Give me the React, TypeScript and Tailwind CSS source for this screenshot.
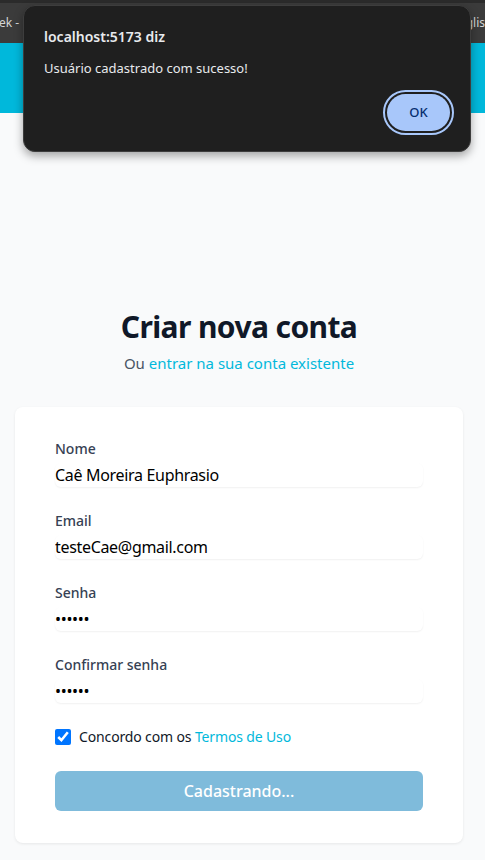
import { useState } from 'react';

const Field = ({ label, type, value }: { label: string; type: string; value: string }) => (
  <div>
    <label className="block text-sm leading-5 font-medium text-gray-700">{label}</label>
    <input
      type={type}
      value={value}
      readOnly
      className="mt-1 block w-full h-6 rounded-md bg-white px-0 text-base leading-6 tracking-[-0.02em] text-black shadow-[0_1px_2px_rgba(0,0,0,0.06)] outline-none"
    />
  </div>
);

const AlertBox = () => (
  <div className="absolute top-[5px] left-[23px] w-[448px] rounded-xl border border-[#3d3d3d] bg-[#1f1f1f] px-5 pt-[21px] pb-5 shadow-[0_4px_10px_rgba(0,0,0,0.35)]">
    <h2 className="text-sm leading-5 font-semibold text-[#e8eaed]">localhost:5173 diz</h2>
    <p className="mt-3 text-[13px] leading-[18px] text-[#e8eaed]">Usuário cadastrado com sucesso!</p>
    <div className="mt-[17px] flex justify-end">
      <button className="h-[37px] w-[63px] rounded-full bg-[#a8c7fa] text-[13px] font-medium text-[#062e6f] outline-2 outline-offset-2 outline-[#a8c7fa]">
        OK
      </button>
    </div>
  </div>
);

export default function App() {
  const [agree] = useState(true);

  return (
    <div className="relative min-h-screen bg-gray-50 font-['Noto_Sans',sans-serif]">
      <div className="flex h-[43px] items-center justify-between overflow-hidden border-t-[3px] border-[#2b2b2b] bg-[#3b3b3b] text-xs text-[#d4d4d4]">
        <span className="-ml-[1px]">ek -</span>
        <span>glis</span>
      </div>
      <div className="h-[70px] bg-cyan-500" />

      <div className="w-[478px] pt-[196px] pb-4">
        <h1 className="text-center text-3xl leading-9 font-bold tracking-[-0.02em] text-gray-900">Criar nova conta</h1>
        <p className="mt-[6px] text-center text-[15px] leading-6 text-gray-600">
          Ou <a className="text-cyan-500">entrar na sua conta existente</a>
        </p>

        <div className="mx-[15px] mt-[32px] w-[448px] rounded-lg bg-white px-10 py-8 shadow-[0_1px_3px_rgba(0,0,0,0.08)]">
          <div className="space-y-6">
            <Field label="Nome" type="text" value="Caê Moreira Euphrasio" />
            <Field label="Email" type="email" value="testeCae@gmail.com" />
            <Field label="Senha" type="password" value="123456" />
            <Field label="Confirmar senha" type="password" value="123456" />

            <div className="flex items-center">
              <input type="checkbox" checked={agree} readOnly className="h-4 w-4 accent-[#0075ff]" />
              <label className="ml-2 text-sm leading-5 tracking-[-0.01em] text-gray-900">
                Concordo com os <a className="text-cyan-500">Termos de Uso</a>
              </label>
            </div>

            <button
              disabled
              className="flex h-10 w-full items-center justify-center rounded-md bg-[#7fbbdb] text-base font-medium text-white"
            >
              Cadastrando...
            </button>
          </div>
        </div>
      </div>

      <AlertBox />
    </div>
  );
}
